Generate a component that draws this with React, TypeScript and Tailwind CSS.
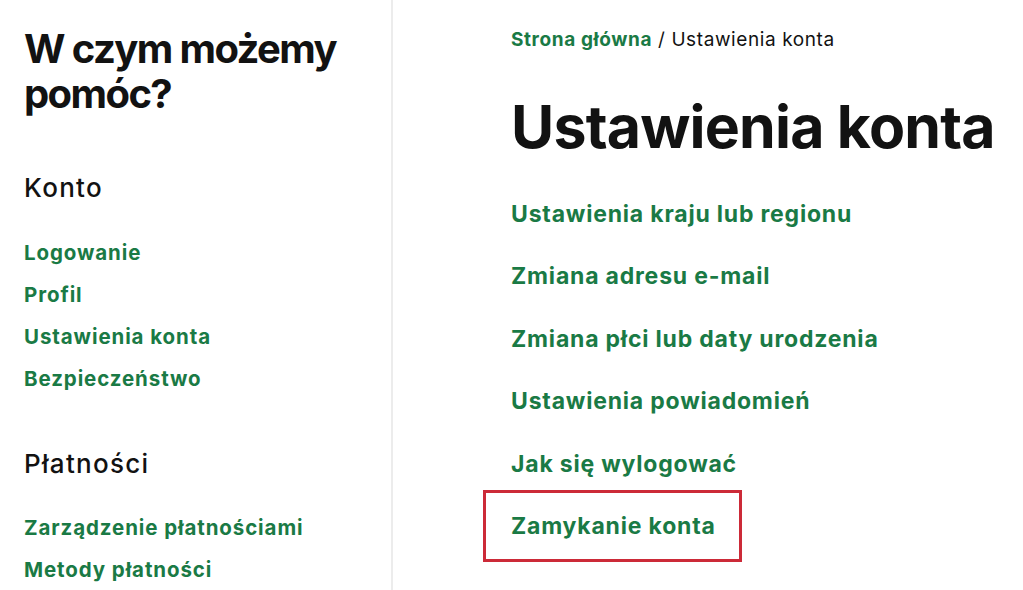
import React from "react";

const green = "text-[#1a7a45]";

export default function App() {
  const leftKonto = ["Logowanie", "Profil", "Ustawienia konta", "Bezpieczeństwo"];
  const leftPlat = ["Zarządzenie płatnościami", "Metody płatności"];
  const rightLinks = [
    "Ustawienia kraju lub regionu",
    "Zmiana adresu e-mail",
    "Zmiana płci lub daty urodzenia",
    "Ustawienia powiadomień",
    "Jak się wylogować",
  ];
  return (
    <div
      className="flex w-[1023px] h-[590px] overflow-hidden bg-white text-[#121212]"
      style={{ fontFamily: "Inter, 'Noto Sans', sans-serif" }}
    >
      <aside className="w-[393px] shrink-0 border-r-2 border-[#ececec] pl-6 pt-[26px]">
        <h2 className="text-[40px] font-bold leading-[45px] tracking-[-1.6px]">
          W czym możemy
          <br />
          pomóc?
        </h2>
        <h3 className="mt-[57px] text-[26px] font-medium leading-[30px] tracking-[1.3px]">Konto</h3>
        <ul className="mt-[38px] flex flex-col gap-[18px]">
          {leftKonto.map((t) => (
            <li key={t} className={`${green} text-[20.5px] font-bold leading-[24px] tracking-[0.9px]`}>
              {t}
            </li>
          ))}
        </ul>
        <h3 className="mt-[58px] text-[26px] font-medium leading-[30px] tracking-[1.3px]">Płatności</h3>
        <ul className="mt-[37px] flex flex-col gap-[18px]">
          {leftPlat.map((t) => (
            <li key={t} className={`${green} text-[20.5px] font-bold leading-[24px] tracking-[0.9px]`}>
              {t}
            </li>
          ))}
        </ul>
      </aside>
      <main className="flex-1 pl-[118px] pt-[28px]">
        <div className="text-[19px] leading-[24px] tracking-[0.6px]">
          <span className={`${green} font-bold`}>Strona główna</span>
          <span className="text-[#121212]"> / Ustawienia konta</span>
        </div>
        <h1 className="mt-[42px] text-[59px] font-bold leading-[66px] tracking-[-0.8px] whitespace-nowrap">
          Ustawienia konta
        </h1>
        <ul className="mt-[40px] flex flex-col">
          {rightLinks.map((t) => (
            <li
              key={t}
              className={`${green} text-[23px] font-bold leading-[28px] tracking-[0.8px] h-[62.4px] flex items-start`}
            >
              {t}
            </li>
          ))}
          <li className="-ml-[28px] -mt-[22px] w-[259px] h-[72px] border-[3px] border-[#cc2a38] pl-[25px] pt-[19px]">
            <span className={`${green} text-[23px] font-bold leading-[28px] tracking-[0.8px]`}>Zamykanie konta</span>
          </li>
        </ul>
      </main>
    </div>
  );
}
